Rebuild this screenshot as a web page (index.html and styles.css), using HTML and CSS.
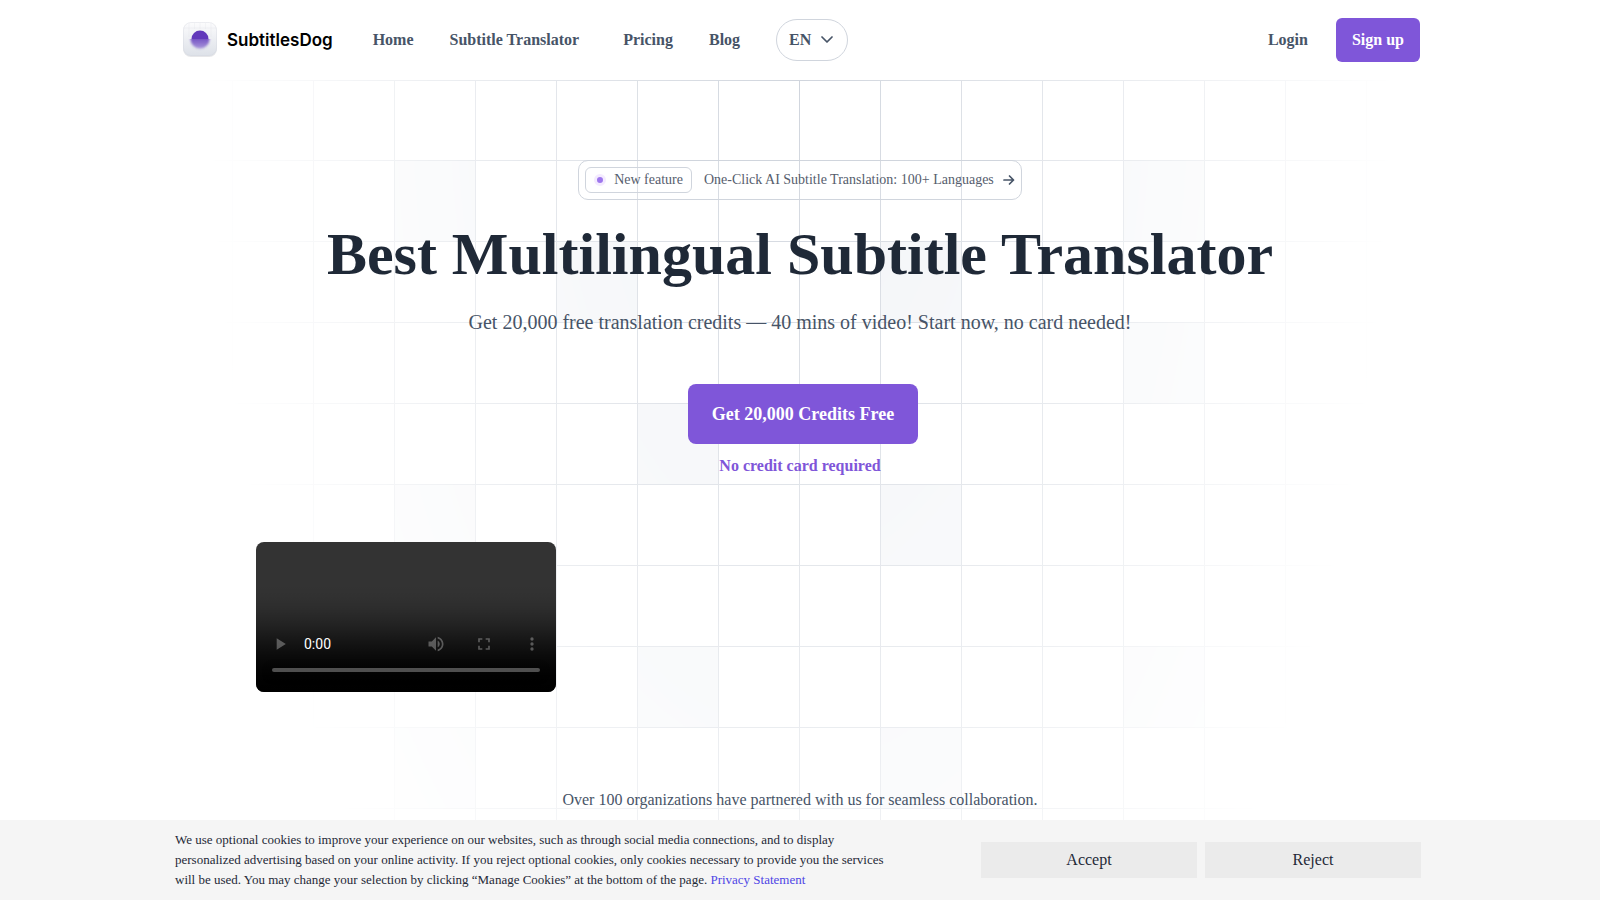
FILE: index.html
```html
<!DOCTYPE html>
<html lang="en">
<head>
<meta charset="utf-8">
<meta name="viewport" content="width=device-width, initial-scale=1">
<title>SubtitlesDog</title>
<link rel="stylesheet" href="styles.css">
</head>
<body>
<header class="header">
  <a class="brand" href="#">
    <svg class="brand-mark" viewBox="0 0 36 38" aria-hidden="true">
      <defs>
        <linearGradient id="tile" x1="0" y1="0" x2="0" y2="1"><stop offset="0" stop-color="#fcfcfd"/><stop offset="1" stop-color="#dde1e8"/></linearGradient>
        <linearGradient id="glow" x1="0" y1="0" x2="0" y2="1"><stop offset="0" stop-color="#6239bb"/><stop offset=".5" stop-color="#6239bb" stop-opacity=".85"/><stop offset="1" stop-color="#6941c6" stop-opacity=".5"/></linearGradient>
        <filter id="soft" x="-30%" y="-30%" width="160%" height="160%"><feGaussianBlur stdDeviation="1.3"/></filter>
        <clipPath id="lower"><rect x="4" y="18" width="28" height="16"/></clipPath>
      </defs>
      <rect x="1" y="2" width="34" height="34" rx="8" fill="#101828" opacity=".1"/>
      <rect x="1" y="1" width="34" height="34" rx="8" fill="url(#tile)"/>
      <path d="M7 2v14M12.500 2v6M18 2v6M23.500 2v6M29 2v14M2 7h32" stroke="#d0d5dd" stroke-width=".5" opacity=".35" fill="none"/>
      <rect x="1.500" y="1.500" width="33" height="33" rx="7.500" fill="none" stroke="#d0d5dd" stroke-opacity=".5" stroke-width=".7"/>
      <g clip-path="url(#lower)"><circle cx="18" cy="18" r="9.500" fill="url(#glow)" filter="url(#soft)"/></g>
      <path d="M9.500 18a8.500 8.500 0 0 1 17 0z" fill="#6239bb"/>
    </svg>
    <span class="brand-name">SubtitlesDog</span>
  </a>
  <nav class="nav">
    <a href="#">Home</a>
    <a class="nav-wide" href="#">Subtitle Translator</a>
    <a href="#">Pricing</a>
    <a href="#">Blog</a>
  </nav>
  <button class="lang" type="button">EN
    <svg class="icon-chevron" viewBox="0 0 12 8" aria-hidden="true"><path d="M1 1l5 5 5-5"/></svg>
  </button>
  <div class="account">
    <a class="login" href="#">Login</a>
    <a class="signup" href="#">Sign up</a>
  </div>
</header>
<main class="hero">
  <svg class="backdrop" viewBox="0 0 1200 960" aria-hidden="true">
    <defs>
      <radialGradient id="fade" gradientUnits="userSpaceOnUse" cx="0" cy="0" r="1" gradientTransform="translate(600 0) scale(595 1160)">
        <stop offset="0" stop-color="#fff"/><stop offset="1" stop-color="#fff" stop-opacity="0"/>
      </radialGradient>
      <mask id="fade-mask" maskUnits="userSpaceOnUse" x="0" y="0" width="1200" height="960"><rect width="1200" height="960" fill="url(#fade)"/></mask>
      <pattern id="lines" patternUnits="userSpaceOnUse" x="32" y="-1" width="81" height="81"><path d="M.5 0V81M0 .5H81" stroke="#d0d5dd" fill="none"/></pattern>
    </defs>
    <g mask="url(#fade-mask)">
      <path d="M0 .5H1200" stroke="#d0d5dd"/>
      <rect y="1" width="1200" height="959" fill="url(#lines)"/>
      <g fill="#f2f4f7">
        <rect x="195" y="81" width="80" height="80"/><rect x="924" y="81" width="80" height="80"/>
        <rect x="357" y="162" width="80" height="80"/><rect x="681" y="162" width="80" height="80"/>
        <rect x="924" y="243" width="80" height="80"/><rect x="438" y="324" width="80" height="80"/>
        <rect x="195" y="405" width="80" height="80"/><rect x="681" y="405" width="80" height="80"/>
        <rect x="438" y="567" width="80" height="80"/><rect x="924" y="567" width="80" height="80"/>
        <rect x="195" y="648" width="80" height="80"/><rect x="681" y="648" width="80" height="80"/>
      </g>
    </g>
  </svg>
  <a class="announce" href="#">
    <span class="tag"><span class="dot"></span>New feature</span>
    <span>One-Click AI Subtitle Translation: 100+ Languages</span>
    <svg class="icon-arrow" viewBox="0 0 12 12" aria-hidden="true"><path d="M1 6h9.500M6.500 2l4 4-4 4"/></svg>
  </a>
  <h1 class="title">Best Multilingual Subtitle Translator</h1>
  <p class="lead">Get 20,000 free translation credits — 40 mins of video! Start now, no card needed!</p>
  <a class="cta" href="#">Get 20,000 Credits Free</a>
  <p class="note">No credit card required</p>
  <div class="media"><video class="clip" controls></video></div>
  <p class="partners">Over 100 organizations have partnered with us for seamless collaboration.</p>
</main>
<aside class="cookies" aria-label="Cookie consent">
  <div class="cookies-inner">
    <p class="cookies-text">We use optional cookies to improve your experience on our websites, such as through social media connections, and to display personalized advertising based on your online activity. If you reject optional cookies, only cookies necessary to provide you the services will be used. You may change your selection by clicking “Manage Cookies” at the bottom of the page. <a href="#">Privacy Statement</a></p>
    <div class="cookies-actions">
      <button type="button">Accept</button>
      <button type="button">Reject</button>
    </div>
  </div>
</aside>
</body>
</html>
```
FILE: styles.css
```css
* { box-sizing: border-box; }
body {
  margin: 0;
  background: #fff;
  color: #475467;
  font: 16px/24px "Liberation Serif", serif;
}
a { color: inherit; text-decoration: none; }
p, h1 { margin: 0; }
button { font: inherit; color: inherit; cursor: pointer; }

.header {
  display: flex;
  align-items: center;
  max-width: 1240px;
  height: 80px;
  margin: 0 auto;
  padding-left: 2px;
  font-weight: 700;
}
.brand { display: flex; align-items: center; gap: 9px; color: #000; }
.brand-mark { width: 36px; height: 38px; }
.brand-name { font: 600 17px/24px Inter, sans-serif; }
.nav { display: flex; gap: 36px; margin-left: 40px; }
.nav-wide { margin-right: 8px; }
.lang {
  display: flex;
  align-items: center;
  gap: 10px;
  height: 42px;
  margin-left: 36px;
  padding: 0 14px 0 12px;
  border: 1px solid #d0d5dd;
  border-radius: 21px;
  background: #fff;
  font-weight: 700;
}
.icon-chevron { width: 12px; height: 8px; fill: none; stroke: #475467; stroke-width: 1.7; stroke-linecap: round; stroke-linejoin: round; }
.account { display: flex; align-items: center; gap: 28px; margin-left: auto; }
.signup { padding: 10px 16px; border-radius: 6px; background: #7f56d9; color: #fff; }

.hero {
  position: relative;
  display: flex;
  flex-direction: column;
  align-items: center;
  padding: 80px 16px 90px;
  text-align: center;
  overflow: hidden;
}
.backdrop {
  position: absolute;
  top: 0;
  left: 50%;
  z-index: -1;
  width: 1200px;
  height: 960px;
  margin-left: -600px;
}
.announce {
  display: flex;
  align-items: center;
  gap: 10px;
  height: 40px;
  padding: 0 6px;
  border: 1px solid #d0d5dd;
  border-radius: 10px;
  color: #565d6d;
  font-size: 14px;
  line-height: 20px;
}
.tag {
  display: flex;
  align-items: center;
  gap: 8px;
  height: 26px;
  margin-right: 2px;
  padding: 0 8px;
  border: 1px solid #d0d5dd;
  border-radius: 6px;
}
.dot { width: 12px; height: 12px; border: 3px solid #f4ebff; border-radius: 50%; background: #9e77ed; }
.icon-arrow { width: 12px; height: 12px; margin-left: -1px; fill: none; stroke: #475467; stroke-width: 1.7; stroke-linecap: round; stroke-linejoin: round; }
.title { margin-top: 18px; color: #1f2937; font-size: 60px; line-height: 72px; }
.lead { margin-top: 17px; font-size: 20px; line-height: 30px; }
.cta {
  margin: 47px 0 0 6px;
  padding: 16px 24px;
  border-radius: 8px;
  background: #7f56d9;
  color: #fff;
  font-weight: 700;
  font-size: 18px;
  line-height: 28px;
}
.note { margin-top: 10px; color: #7f56d9; font-weight: 700; }
.media { display: flex; width: 100%; max-width: 1088px; margin-top: 64px; }
.clip { width: 300px; height: 150px; border-radius: 8px; }
.partners { margin-top: 96px; }

.cookies { position: fixed; right: 0; bottom: 0; left: 0; background: #f5f5f5; color: #1f2937; }
.cookies-inner {
  display: flex;
  align-items: center;
  justify-content: space-between;
  gap: 32px;
  max-width: 1250px;
  min-height: 80px;
  margin: 0 auto;
  padding: 10px 4px 10px 0;
}
.cookies-text { max-width: 720px; font-size: 13px; line-height: 20px; }
.cookies-text a { color: #4f46e5; }
.cookies-actions { display: flex; gap: 8px; }
.cookies-actions button { width: 216px; height: 36px; padding: 0; border: 0; background: #ebebeb; }
```
